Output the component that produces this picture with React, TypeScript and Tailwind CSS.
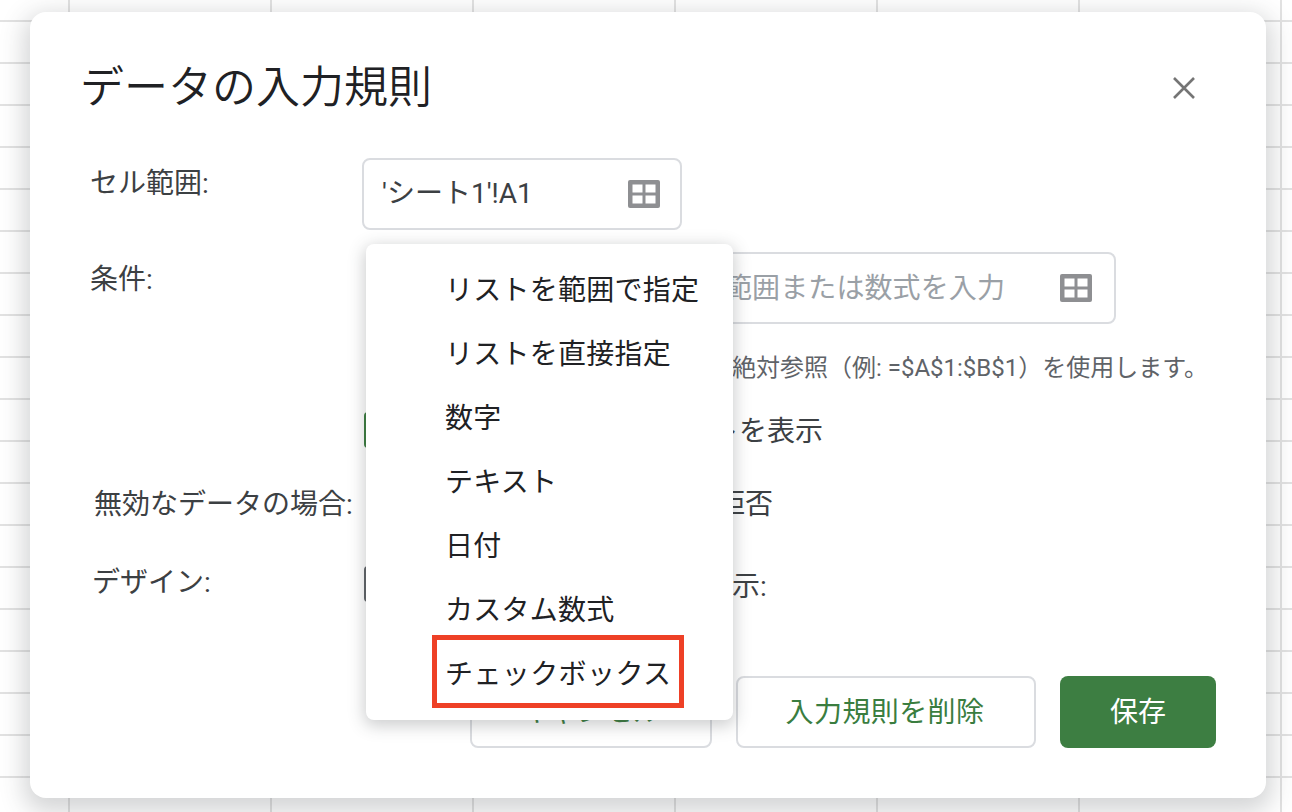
const font = "font-['Roboto','Noto_Sans_CJK_JP',sans-serif]";

function GridIcon() {
  return (
    <svg width="32" height="28" viewBox="0 0 32 28" className="shrink-0">
      <rect width="32" height="28" rx="2" fill="#8e8f92" />
      <rect x="4.5" y="4.5" width="10" height="8" fill="#fff" />
      <rect x="17.5" y="4.5" width="10" height="8" fill="#fff" />
      <rect x="4.5" y="15.5" width="10" height="8" fill="#fff" />
      <rect x="17.5" y="15.5" width="10" height="8" fill="#fff" />
    </svg>
  );
}

const items = ["リストを範囲で指定", "リストを直接指定", "数字", "テキスト", "日付", "カスタム数式"];

export default function App() {
  return (
    <div
      className={`${font} relative w-[1292px] h-[812px] overflow-hidden bg-white pt-[12px] pl-[30px] bg-[linear-gradient(to_right,#e2e2e2_2px,transparent_2px),linear-gradient(to_bottom,#e2e2e2_2px,transparent_2px)] bg-[size:202px_42px] bg-[position:68px_20px]`}
    >
      <div className="relative flex flex-col w-[1236px] h-[786px] bg-white rounded-[16px] shadow-[0_8px_24px_6px_rgba(60,64,67,0.22)]">
        {/* title */}
        <div className="flex items-center justify-between h-[52px] mt-[50px] pl-[50px] pr-[71px]">
          <h1 className="text-[44px] leading-[52px] font-[350] text-[#202124] whitespace-nowrap">データの入力規則</h1>
          <svg width="22" height="22" viewBox="0 0 22 22" fill="none" stroke="#757575" strokeWidth="2.6">
            <path d="M1 1 21 21M21 1 1 21" />
          </svg>
        </div>

        {/* cell range */}
        <div className="flex mt-[44px] pl-[60px]">
          <div className="w-[272px] pt-[6px] text-[28px] leading-[40px] text-[#3c4043]">セル範囲:</div>
          <div className="flex items-center justify-between w-[320px] h-[72px] pl-[18px] pr-[20px] border-2 border-[#dadce0] rounded-[8px] text-[28px] text-[#3c4043]">
            <span>'シート1'!A1</span>
            <GridIcon />
          </div>
        </div>

        {/* criteria */}
        <div className="flex mt-[22px] pl-[60px]">
          <div className="w-[272px] pt-[8px] text-[28px] leading-[40px] text-[#3c4043]">条件:</div>
          <div className="flex flex-col">
            <div className="flex gap-[24px]">
              <div className="w-[318px] h-[72px]" />
              <div className="flex items-center justify-between w-[412px] h-[72px] pl-[18px] pr-[22px] border-2 border-[#dadce0] rounded-[8px] text-[28px] text-[#9aa0a6]">
                <span className="pt-[2px] tracking-[0.1px]">範囲または数式を入力</span>
                <GridIcon />
              </div>
            </div>
            <div className="mt-[26px] pl-[370px] text-[24px] leading-[36px] text-[#5f6368] whitespace-nowrap">絶対参照（例: =$A$1:$B$1）を使用します。</div>
            <div className="flex items-center mt-[26px] pl-[2px] h-[36px]">
              <div className="w-[36px] h-[36px] rounded-[4px] bg-[#3a7d3f]" />
              <span className="ml-[311px] pt-[4px] text-[28px] leading-[40px] text-[#3c4043] whitespace-nowrap">トを表示</span>
            </div>
          </div>
        </div>

        {/* invalid data */}
        <div className="flex items-center mt-[35px] h-[40px] pl-[64px]">
          <div className="w-[268px] pt-[4px] text-[28px] leading-[40px] text-[#3c4043] whitespace-nowrap">無効なデータの場合:</div>
          <span className="ml-[355px] pt-[4px] text-[28px] leading-[40px] text-[#3c4043] whitespace-nowrap">拒否</span>
        </div>

        {/* design */}
        <div className="flex items-center mt-[41px] h-[40px] pl-[62px]">
          <div className="w-[270px] -mt-[2px] text-[28px] leading-[40px] text-[#3c4043]">デザイン:</div>
          <div className="w-[36px] h-[36px] ml-[2px] rounded-[4px] bg-[#5f6368]" />
          <span className="ml-[332px] pt-[6px] text-[28px] leading-[40px] text-[#3c4043] whitespace-nowrap">示:</span>
        </div>

        {/* buttons */}
        <div className="flex justify-end gap-[24px] mt-auto mb-[50px] pr-[50px]">
          <button className="h-[72px] w-[242px] pt-[2px] border-2 border-[#dadce0] rounded-[8px] text-[28px] text-[#3a7d3f]">キャンセル</button>
          <button className="h-[72px] w-[300px] pt-[2px] pr-[2px] border-2 border-[#dadce0] rounded-[8px] text-[28px] tracking-[0.4px] text-[#3a7d3f]">入力規則を削除</button>
          <button className="h-[72px] w-[156px] pt-[2px] rounded-[8px] bg-[#3d7e42] text-[28px] text-white">保存</button>
        </div>
      </div>

      {/* dropdown menu */}
      <div className="absolute left-[366px] top-[244px] w-[367px] h-[476px] pt-[15px] bg-white rounded-[8px] shadow-[0_4px_16px_2px_rgba(60,64,67,0.25)]">
        {items.map((t) => (
          <div key={t} className="flex items-center h-[64px] pl-[79px] text-[28px] tracking-[0.25px] text-[#202124] whitespace-nowrap">{t}</div>
        ))}
        <div className="relative flex items-center h-[64px] pl-[79px] text-[28px] tracking-[0.4px] text-[#202124] whitespace-nowrap">
          チェックボックス
          <div className="absolute left-[66px] -top-[8px] w-[252px] h-[73px] border-[5px] border-[#ee4026]" />
        </div>
      </div>
    </div>
  );
}
